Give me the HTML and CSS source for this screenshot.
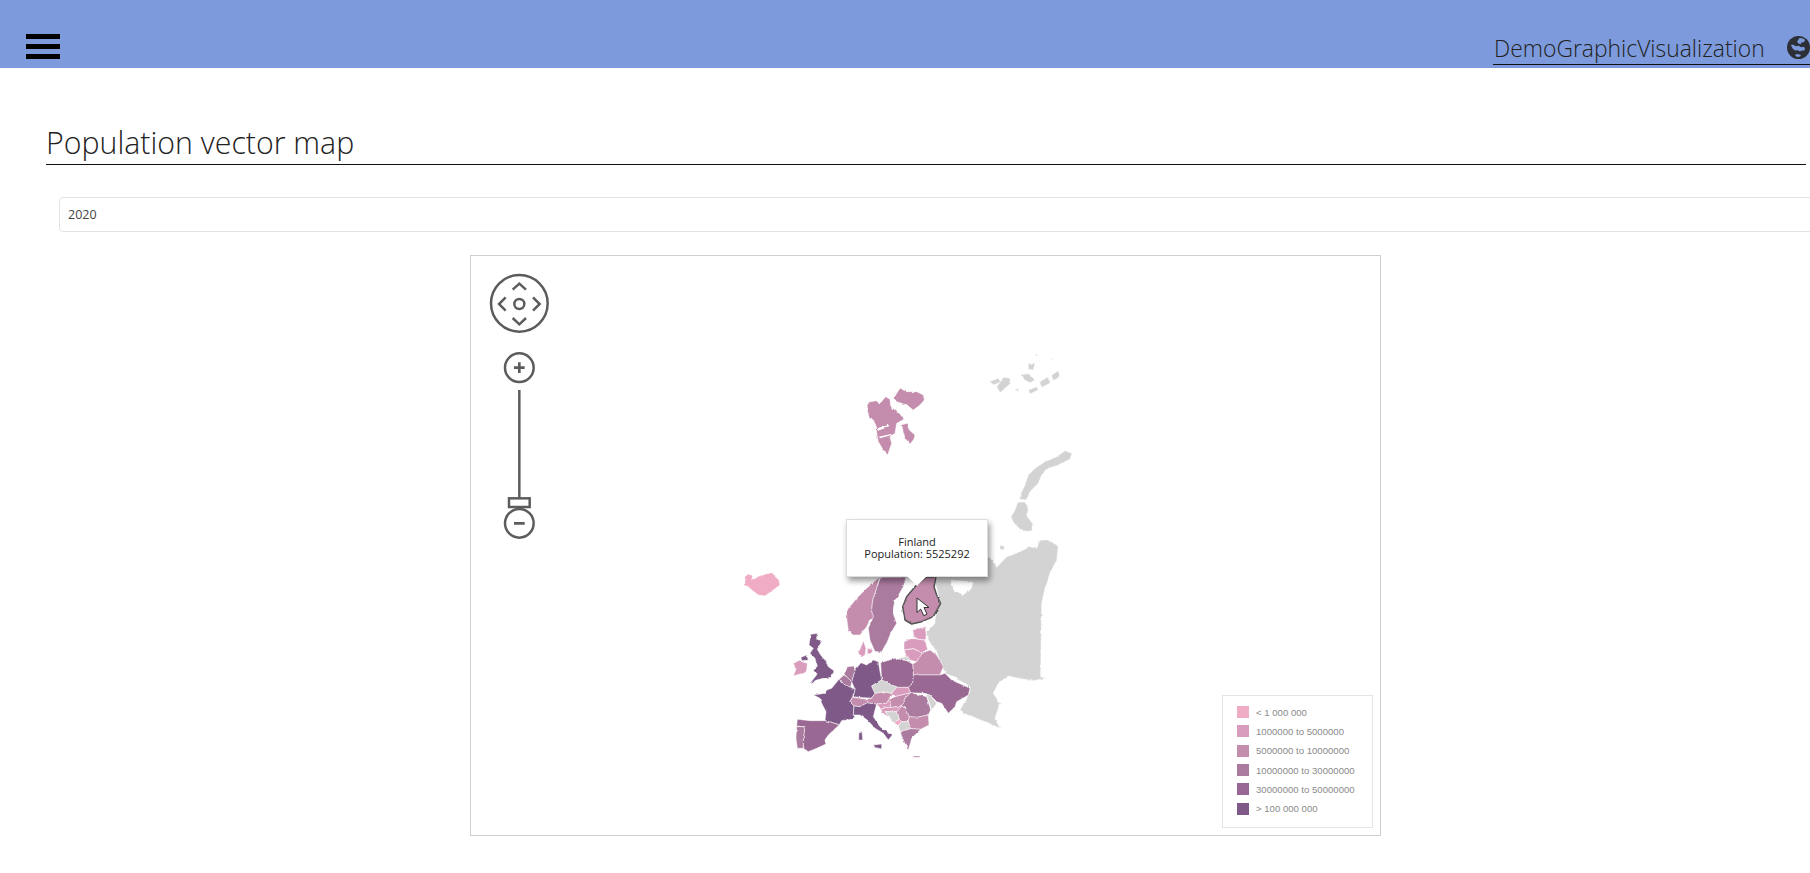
FILE: index.html
```html
<!DOCTYPE html>
<html lang="en">
<head>
<meta charset="utf-8">
<title>Population vector map</title>
<link rel="stylesheet" href="styles.css">
</head>
<body>
<header class="topbar">
  <button class="menu" aria-label="Menu"><span></span><span></span><span></span></button>
  <div class="brand">
    <span class="brand-name">DemoGraphicVisualization</span>
    <svg class="globe" viewBox="0 0 24 24" width="23" height="23">
      <circle class="globe-disc" cx="12" cy="12" r="12"/>
      <path class="globe-cut" d="M13 2.200c2.500-.2 4.500.6 6 2l-1.500 2.300-2.500.3-.8 1.700-2.200-.6-1.500-1.800 1.200-2zM4 9.500l3-.5 2 1.600 3.200-.4 2.300 1.500 3-.4 1.300 1.600-1 2.600-2.600-.5-1.600 1.300-2.300-1.500-2.800.3-2.400-1.800zM8 19.500l3.500-.8 3 1-.7 1.800-3.400.3z"/>
    </svg>
  </div>
</header>
<main class="page">
  <h1 class="title">Population vector map</h1>
  <select class="year"><option>2020</option></select>
  <section class="map">
    <svg class="map-svg" viewBox="471 256 909 579" width="909" height="579">
      <defs>
        <filter id="rough" filterUnits="userSpaceOnUse" x="471" y="256" width="909" height="579">
          <feTurbulence type="fractalNoise" baseFrequency=".2" numOctaves="2" seed="4" result="n"/>
          <feDisplacementMap in="SourceGraphic" in2="n" scale="2.500" xChannelSelector="R" yChannelSelector="G"/>
          <feGaussianBlur stdDeviation=".3"/>
        </filter>
      </defs>
      <g transform="translate(460 250) scale(.33333)" class="ctl">
        <circle cx="178" cy="160" r="85"/>
        <circle cx="178" cy="162" r="15"/>
        <path d="M158 119l20-18 20 18M158 204l20 19 20-19M137 142l-20 20 20 20M219 142l20 20-20 20"/>
        <circle cx="178" cy="353" r="43"/>
        <path class="thick" d="M162 353h32M178 337v32M162 820h32"/>
        <path d="M178 420v325"/>
        <rect x="147" y="745" width="62" height="26"/>
        <circle cx="178" cy="820" r="43"/>
      </g>
      <g filter="url(#rough)">
        <g transform="translate(720 340) scale(.33333)">
          <g class="land none">
            <path d="M680 640L805 650 820 660 830 682 860 650 890 640 930 620 950 625 960 600 985 600 1015 618 1010 660 990 700 975 745 965 790 962 1010 978 1015 940 1022 895 1015 865 1008 835 1030 820 1060 840 1090 825 1135 840 1165 795 1145 730 1120 720 1110 750 1055 750 1040 700 1010 675 1000 660 965 650 935 625 900 622 875 645 850 645 840 660 785 645 725 660 700Z"/>
            <path d="M1035 332L1056 340 1050 358 1015 375 985 385 965 405 955 430 930 455 920 480 898 478 905 455 915 435 925 405 945 385 975 365 1010 350Z"/>
            <path d="M893 487L918 485 925 510 920 525 940 555 935 575 905 572 880 548 873 530 885 510Z"/>
            <path d="M840 615L855 620 850 630 840 628Z"/>
            <path d="M808 125L835 115 842 125 822 135ZM830 140L850 112 870 115 872 130 850 150 840 158ZM905 105L925 100 945 120 930 128 910 118ZM925 70L945 70 940 90 925 88ZM958 125L985 112 990 130 965 142ZM995 105L1015 92 1020 110 1000 122ZM925 150L950 140 955 150 930 162ZM885 150L895 145 895 155ZM945 45L957 45 950 50ZM993 55L1003 58 995 60Z"/>
          </g>
          <path class="sea" d="M692 720L725 722 760 725 755 745 730 765 700 750Z"/>
          <g class="land c3">
            <path d="M442 187L470 182 478 192 497 170 510 178 512 200 537 218 552 238 530 250 525 280 510 290 515 310 503 345 490 330 475 305 470 280 470 262 460 240 448 235 442 210Z"/>
            <path d="M522 175L530 160 540 145 560 155 590 155 610 165 613 180 600 195 580 210 560 195 530 185Z"/>
            <path d="M545 255L560 250 568 270 585 285 580 300 570 312 555 295 550 275Z"/>
            <path d="M478 712L440 745 410 775 383 808 380 835 385 870 398 885 420 885 440 860 450 840 460 830 455 810 458 780 470 745Z"/>
          </g>
          <path class="sea" d="M474 264L505 254 508 258 490 266 474 272ZM476 290L513 282 513 286 480 295Z"/>
          <path class="land c1" d="M72 712L85 702 98 708 95 720 125 705 155 698 175 715 180 735 160 750 135 768 115 765 95 750 85 740 70 735 80 725Z"/>
          <path class="land c4" d="M482 712L558 712 550 740 530 775 525 780 518 815 530 850 512 880 502 905 485 935 465 935 450 900 445 865 460 830 455 810 458 780 470 745Z"/>
          <path class="finland" d="M585 740L620 710 648 712 642 740 650 765 662 790 640 830 605 845 575 852 555 840 548 800 560 770Z"/>
        </g>
        <g transform="translate(760 600) scale(.33333)" class="land">
          <path class="c2" d="M458 90L495 80 500 110 495 120 475 118 462 110ZM432 125L455 115 475 118 495 120 503 148 487 160 480 155 460 146 432 150ZM432 150L460 146 480 155 487 160 470 185 445 180Z"/>
          <path class="c3" d="M487 160L510 150 530 165 550 200 540 225 480 225 460 225 458 192 470 185Z"/>
          <path class="none" d="M415 175L445 168 450 182 405 175Z"/>
          <path class="c5" d="M362 188L405 175 440 182 458 192 460 225 458 250 445 262 410 262 385 250 365 240Z"/>
          <path class="c6" d="M303 188L320 195 340 180 355 185 360 215 365 240 335 258 345 280 335 295 280 290 285 268 275 245 285 210Z"/>
          <path class="c2" d="M295 160L310 122 318 145 315 165 305 172ZM322 145L336 148 332 162 322 160Z"/>
          <path class="c4" d="M252 222L262 200 282 198 285 210 275 245 262 232Z"/>
          <path class="c4" d="M237 238L252 225 262 232 275 245 272 262 255 255Z"/>
          <path class="c6" d="M160 285L195 280 200 270 215 265 237 238 255 255 272 262 285 268 278 290 270 305 282 318 280 345 285 350 275 358 245 362 238 374 195 362 198 335 185 310 180 295Z"/>
          <path class="c6" d="M152 103L172 100 170 118 186 122 172 148 182 165 195 180 205 200 222 212 215 232 190 235 170 240 150 250 172 222 160 212 172 198 165 175 150 160 160 145 147 135ZM123 172L140 165 145 180 125 182Z"/>
          <path class="c2" d="M100 190L120 180 125 185 142 190 140 212 120 222 100 228 108 208Z"/>
          <path class="c3" d="M270 305L278 292 315 297 322 297 322 308 300 320 282 318Z"/>
          <path class="c6" d="M282 318L300 320 322 308 350 312 345 330 340 350 360 380 385 398 397 405 385 420 370 400 345 385 322 360 300 345 280 345ZM297 395L306 395 308 420 296 420ZM340 435L365 432 365 447 345 442Z"/>
          <path class="c3" d="M322 297L335 295 345 280 370 275 395 280 388 298 380 310 350 312 322 308Z"/>
          <path class="none" d="M335 258L365 240 385 250 410 262 395 280 370 275 345 280Z"/>
          <path class="c2" d="M395 280L410 262 445 262 452 278 425 285 405 290Z"/>
          <path class="c3" d="M385 300L405 290 425 285 452 278 435 295 425 318 395 322Z"/>
          <path class="c2" d="M350 312L380 310 385 300 395 322 378 322 362 328ZM362 328L378 322 395 322 425 318 420 330 412 335 375 335 405 370 385 350 368 340Z"/>
          <path class="none" d="M375 335L412 335 418 358 402 368Z"/>
          <path class="c3" d="M425 318L438 325 448 350 445 365 425 365 418 358 412 335Z"/>
          <path class="c1" d="M402 368L418 358 425 365 415 378Z"/>
          <path class="none" d="M415 378L425 365 445 365 452 386 430 392 422 398Z"/>
          <path class="c4" d="M435 295L452 278 480 285 500 290 512 330 505 345 470 352 448 350 438 325 425 318Z"/>
          <path class="none" d="M498 282L510 285 530 310 515 332 508 308Z"/>
          <path class="c3" d="M448 350L470 352 505 345 507 375 482 388 452 386 445 365Z"/>
          <path class="c4" d="M422 398L430 392 452 386 482 388 455 415 445 450 432 425ZM458 468L480 468 480 472 462 472Z"/>
          <path class="c5" d="M445 262L458 250 460 225 480 225 540 225 555 220 575 240 630 265 625 285 590 305 585 320 565 340 545 310 530 305 510 285 495 280 452 278Z"/>
          <path class="c5" d="M112 358L150 362 195 362 238 374 205 405 195 420 198 432 170 445 145 455 130 445 130 415 135 380 110 378Z"/>
          <path class="c4" d="M110 380L135 380 130 415 130 445 112 445 108 415Z"/>
        </g>
      </g>
      <path class="cursor" d="M917 598v14.500l3.700-3.400 3 6.600 3.300-1.600-3-6.600h5z"/>
    </svg>
    <div class="tip">Finland<br>Population: 5525292</div>
    <ul class="legend">
      <li><i class="sw1"></i>&lt; 1 000 000</li>
      <li><i class="sw2"></i>1000000 to 5000000</li>
      <li><i class="sw3"></i>5000000 to 10000000</li>
      <li><i class="sw4"></i>10000000 to 30000000</li>
      <li><i class="sw5"></i>30000000 to 50000000</li>
      <li><i class="sw6"></i>&gt; 100 000 000</li>
    </ul>
  </section>
</main>
</body>
</html>
```
FILE: styles.css
```css
* { box-sizing: border-box; }
html, body { margin: 0; height: 873px; overflow: hidden; background: #fff; font-family: "Open Sans", "Noto Sans", sans-serif; }

.topbar { height: 68px; background: #7d9bdc; display: flex; justify-content: space-between; align-items: flex-end; }
.menu { border: 0; background: none; padding: 0; margin: 0 0 9px 26px; width: 34px; display: flex; flex-direction: column; gap: 5px; }
.menu span { display: block; height: 5px; background: #000; }
.brand { width: 317px; height: 33px; margin-bottom: 3px; padding-left: 1px; border-bottom: 1.500px solid #111; display: flex; align-items: center; gap: 22px; white-space: nowrap; }
.brand-name { font-size: 22.900px; font-weight: 300; color: #222; }
.globe { flex: none; margin-bottom: 2px; }
.globe-disc { fill: #2c2f36; }
.globe-cut { fill: #7d9bdc; }

.page { display: flex; flex-direction: column; align-items: flex-start; }
.title { margin: 53px 0 0 46px; width: 1760px; height: 44px; font-size: 30.300px; line-height: 44px; font-weight: 300; color: #222; border-bottom: 1px solid #111; white-space: nowrap; }
.year { appearance: none; display: block; margin: 32px 0 0 59px; width: 1800px; height: 35px; padding: 0 8px; border: 1px solid #e3e3e3; border-radius: 4px; background: #fff; font: 12.500px "Open Sans", sans-serif; color: #444; }

.map { position: relative; margin: 23px 0 0 470px; width: 911px; height: 581px; border: 1px solid #cfcfcf; }
.map-svg { display: block; }

.ctl circle, .ctl path, .ctl rect { fill: none; stroke: #5c5c5c; stroke-width: 7.500; }
.ctl .thick { stroke-width: 8; }

.land path, path.land { stroke: #fff; stroke-width: 1.500; stroke-linejoin: round; }
.none, .none path { fill: #d3d3d3; }
.c1 { fill: #f0abc5; }
.c2 { fill: #d99cbc; }
.c3, .c3 path { fill: #c48dad; }
.c4 { fill: #ab7a9f; }
.c5 { fill: #996793; }
.c6 { fill: #7f5a88; }
.sea { fill: #fff; }
.finland { fill: #c48dad; stroke: #555; stroke-width: 4.500; stroke-linejoin: round; }
.cursor { fill: #fff; stroke: #333; stroke-width: 1; stroke-linejoin: round; }

.tip { position: absolute; left: 375px; top: 263px; width: 142px; height: 58px; padding-top: 16px; background: #fff; border: 1px solid #ddd; box-shadow: 2px 4px 6px rgba(0, 0, 0, .4); font-size: 11px; line-height: 12px; color: #222; text-align: center; }
.tip::after { content: ""; position: absolute; left: 60px; bottom: -10px; width: 20px; height: 10px; background: #fff; clip-path: polygon(0 0, 100% 0, 50% 100%); }

.legend { position: absolute; left: 751px; top: 439px; width: 151px; height: 133px; margin: 0; padding: 6.500px 0 0 14px; list-style: none; border: 1px solid #e5e5e5; background: #fff; font: 9.600px "Liberation Sans", Arial, sans-serif; color: #8a8a8a; }
.legend li { display: flex; align-items: center; gap: 7px; height: 19.300px; white-space: nowrap; }
.legend i { display: block; width: 12px; height: 12px; }
.sw1 { background: #f0abc5; }
.sw2 { background: #d99cbc; }
.sw3 { background: #c48dad; }
.sw4 { background: #ab7a9f; }
.sw5 { background: #996793; }
.sw6 { background: #7f5a88; }
```
